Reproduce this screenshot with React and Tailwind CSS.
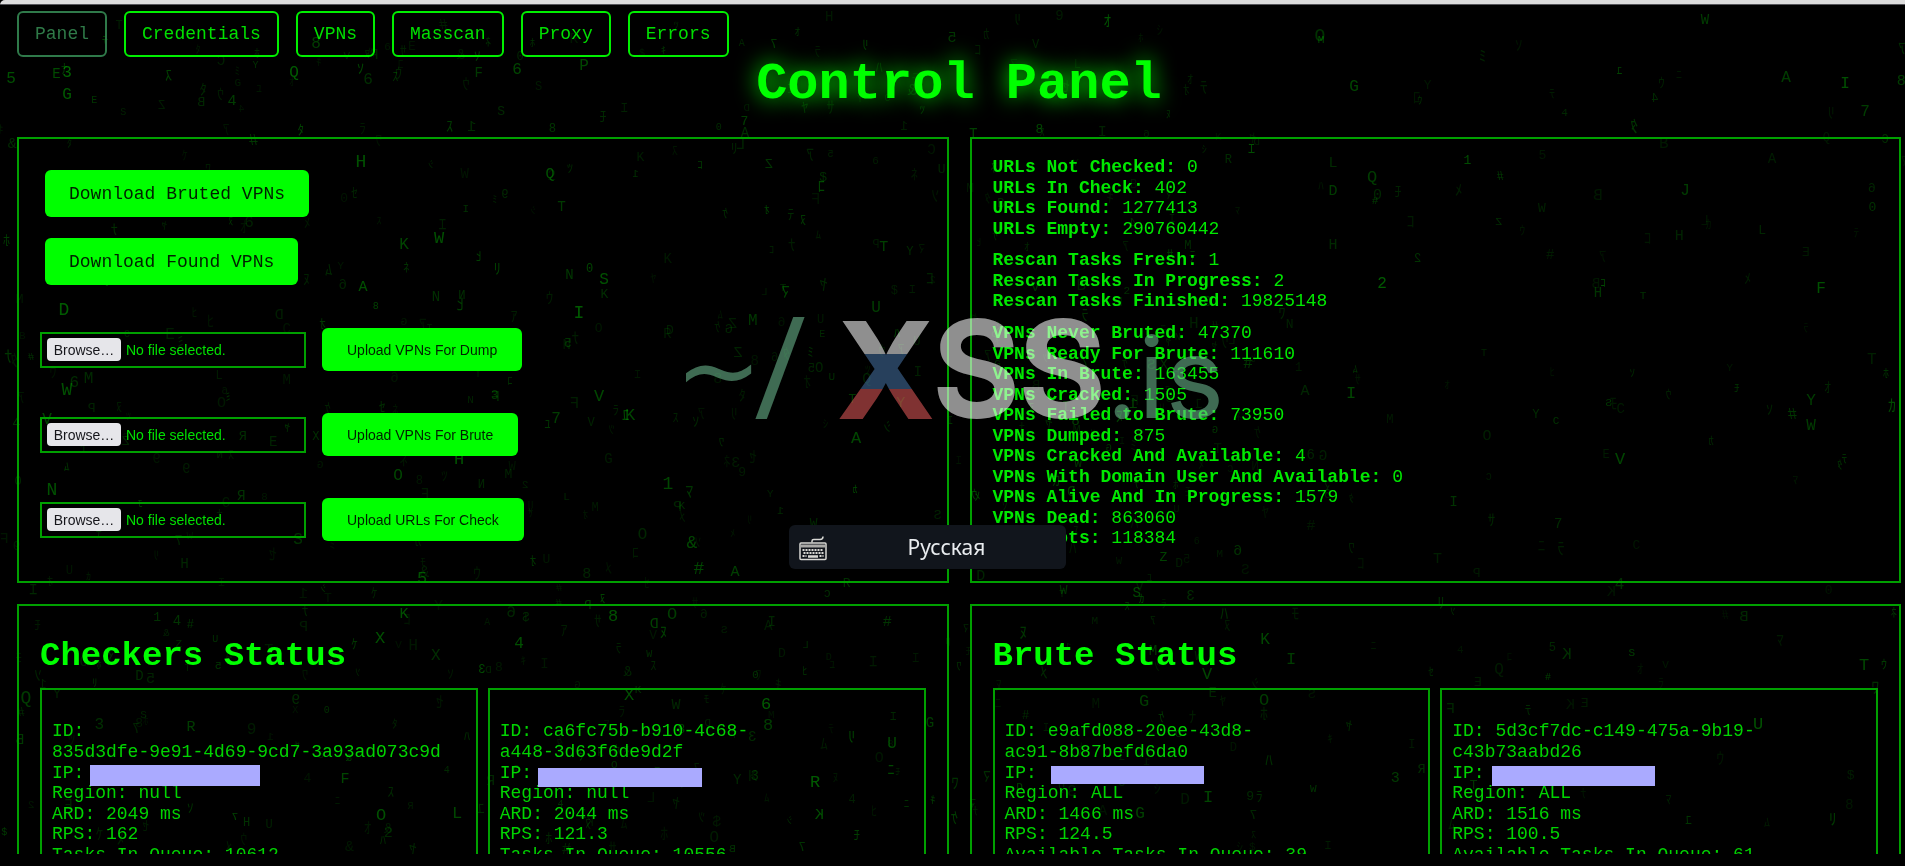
import React, { useEffect, useRef } from 'react';

const navItems = ['Panel', 'Credentials', 'VPNs', 'Masscan', 'Proxy', 'Errors'];

const uploads = [
  { id: 'dump', label: 'Upload VPNs For Dump' },
  { id: 'brute', label: 'Upload VPNs For Brute' },
  { id: 'check', label: 'Upload URLs For Check' },
];

const stats = [
  [
    ['URLs Not Checked', '0'],
    ['URLs In Check', '402'],
    ['URLs Found', '1277413'],
    ['URLs Empty', '290760442'],
  ],
  [
    ['Rescan Tasks Fresh', '1'],
    ['Rescan Tasks In Progress', '2'],
    ['Rescan Tasks Finished', '19825148'],
  ],
  [
    ['VPNs Never Bruted', '47370'],
    ['VPNs Ready For Brute', '111610'],
    ['VPNs In Brute', '163455'],
    ['VPNs Cracked', '1505'],
    ['VPNs Failed to Brute', '73950'],
    ['VPNs Dumped', '875'],
    ['VPNs Cracked And Available', '4'],
    ['VPNs With Domain User And Available', '0'],
    ['VPNs Alive And In Progress', '1579'],
    ['VPNs Dead', '863060'],
    ['Honeypots', '118384'],
  ],
];

// id is split where it may wrap
const checkers = [
  {
    id: ['', '835d3dfe-9e91-4d69-9cd7-3a93ad073c9d'],
    mask: 'left-[38px] top-[2px] w-[170px] h-[21px]',
    rows: ['Region: null', 'ARD: 2049 ms', 'RPS: 162', 'Tasks In Queue: 10612'],
  },
  {
    id: ['ca6fc75b-b910-4c68-', 'a448-3d63f6de9d2f'],
    mask: 'left-[38px] top-[5px] w-[164px] h-[19px]',
    rows: ['Region: null', 'ARD: 2044 ms', 'RPS: 121.3', 'Tasks In Queue: 10556'],
  },
];

const bruters = [
  {
    id: ['e9afd088-20ee-43d8-', 'ac91-8b87befd6da0'],
    mask: 'left-[46px] top-[3px] w-[153px] h-[18px]',
    rows: ['Region: ALL', 'ARD: 1466 ms', 'RPS: 124.5', 'Available Tasks In Queue: 39'],
  },
  {
    id: ['5d3cf7dc-c149-475a-9b19-', 'c43b73aabd26'],
    mask: 'left-[40px] top-[3px] w-[163px] h-[20px]',
    rows: ['Region: ALL', 'ARD: 1516 ms', 'RPS: 100.5', 'Available Tasks In Queue: 61'],
  },
];

// Glyphs that have just been lit: [char, x, y, size, alpha]
const litGlyphs = [
  ['5', 11, 79, 16, 0.4], ['3', 67, 73, 16, 0.5], ['G', 67, 95, 16, 0.45], ['Q', 294, 73, 16, 0.45],
  ['8', 316, 44, 16, 0.3], ['4', 232, 101, 15, 0.3], ['6', 517, 70, 16, 0.35], ['P', 584, 66, 16, 0.35],
  ['H', 361, 162, 18, 0.4], ['Q', 550, 174, 15, 0.4], ['K', 404, 245, 16, 0.35], ['W', 439, 238, 17, 0.4],
  ['A', 363, 287, 15, 0.4], ['D', 64, 310, 18, 0.45], ['I', 579, 313, 18, 0.45], ['S', 604, 280, 16, 0.4],
  ['W', 67, 390, 18, 0.4], ['N', 52, 490, 18, 0.4], ['V', 599, 396, 17, 0.35], ['K', 630, 415, 17, 0.35],
  ['H', 459, 459, 17, 0.4], ['O', 398, 476, 16, 0.35], ['V', 47, 420, 16, 0.35], ['1', 668, 484, 18, 0.35],
  ['&', 692, 543, 18, 0.35], ['#', 699, 569, 18, 0.35], ['5', 422, 578, 17, 0.4], ['7', 556, 419, 16, 0.3],
  ['U', 876, 308, 16, 0.3], ['A', 856, 438, 17, 0.35], ['Q', 1372, 177, 17, 0.3], ['D', 1333, 191, 15, 0.3],
  ['I', 1351, 393, 17, 0.35], ['2', 1382, 284, 16, 0.45], ['O', 1320, 36, 18, 0.25], ['G', 1354, 87, 16, 0.35],
  ['I', 1845, 84, 16, 0.4], ['F', 1821, 289, 16, 0.4], ['Y', 1811, 401, 16, 0.3], ['W', 1811, 426, 16, 0.3],
  ['V', 1620, 459, 17, 0.35], ['K', 404, 614, 15, 0.4], ['X', 380, 638, 17, 0.4], ['8', 613, 616, 17, 0.4],
  ['O', 672, 614, 17, 0.3], ['4', 519, 644, 16, 0.4], ['X', 629, 695, 17, 0.4], ['6', 766, 704, 17, 0.45],
  ['8', 768, 725, 17, 0.3], ['U', 892, 744, 16, 0.35], ['R', 815, 782, 17, 0.45], ['O', 381, 815, 17, 0.4],
  ['Q', 26, 698, 18, 0.3], ['R', 191, 727, 15, 0.3], ['L', 457, 813, 17, 0.35], ['F', 345, 779, 15, 0.35],
  ['K', 1265, 640, 16, 0.35], ['V', 1207, 674, 17, 0.35], ['I', 1291, 659, 17, 0.3], ['O', 1264, 700, 17, 0.3],
  ['G', 1144, 701, 17, 0.3], ['I', 1208, 797, 17, 0.35], ['T', 1864, 665, 17, 0.35], ['U', 1758, 724, 17, 0.4],
  ['W', 1705, 20, 14, 0.3], ['A', 1786, 78, 16, 0.3], ['7', 1865, 112, 16, 0.3], ['J', 1685, 191, 16, 0.3],
];

const MatrixRain = () => {
  const ref = useRef(null);

  useEffect(() => {
    const canvas = ref.current;
    canvas.width = window.innerWidth;
    canvas.height = window.innerHeight;
    const ctx = canvas.getContext('2d');
    const latin = '0123456789ABCDEFGHIKLMNOPQRSTUVWXYZ$#&';
    const kana = 'ｱｳｴｵｶｷｹｺｻｼｽｾｿﾀﾂﾃﾅﾆﾇﾈﾊﾋﾎﾏﾐﾑﾒﾓﾔﾕﾗﾘﾜ';
    let seed = 1337;
    const rand = () => {
      seed = (seed * 16807) % 2147483647;
      return seed / 2147483647;
    };

    ctx.clearRect(0, 0, canvas.width, canvas.height);
    ctx.textAlign = 'center';
    ctx.textBaseline = 'middle';

    const put = (char, x, y, size, alpha, mirrored) => {
      ctx.save();
      ctx.translate(x, y);
      if (mirrored) ctx.scale(-1, 1);
      ctx.font = `${size}px "Liberation Mono", "Noto Sans CJK JP", monospace`;
      ctx.fillStyle = `rgba(0, 200, 0, ${alpha})`;
      ctx.fillText(char, 0, 0);
      ctx.restore();
    };

    const count = Math.round((canvas.width * canvas.height) / 1350);
    for (let i = 0; i < count; i++) {
      const x = rand() * canvas.width;
      const y = 16 + rand() * (canvas.height - 30);
      // the rain thins out to the right of the statistics
      const keep = rand() < (x > canvas.width * 0.66 ? 0.35 : 0.9);
      const set = rand() < 0.5 ? latin : kana;
      const char = set[Math.floor(rand() * set.length)];
      const size = 10 + Math.round(rand() * 6);
      const alpha = 0.1 + rand() * rand() * 0.32;
      const mirrored = rand() < 0.5;
      if (keep) put(char, x, y, size, alpha, mirrored);
    }
    litGlyphs.forEach(([char, x, y, size, alpha]) => put(char, x, y, size, alpha, false));
  }, []);

  return <canvas ref={ref} aria-hidden="true" className="absolute inset-0" />;
};

const Panel = ({ children, className = '' }) => (
  <section className={`border-2 border-[#00a000] px-[21px] ${className}`}>{children}</section>
);

const NavButton = ({ label, active }) => (
  <button
    type="button"
    className={`h-[46px] rounded-md border-2 px-4 ${
      active ? 'border-[#2f7a4a] text-[#2f7a48]' : 'border-[#00f000] text-[#00e000]'
    }`}
  >
    {label}
  </button>
);

const UploadRow = ({ id, label }) => (
  <form className="flex items-center gap-4" onSubmit={(e) => e.preventDefault()}>
    <label
      htmlFor={id}
      className="flex h-9 w-[266px] items-center gap-[5px] border-2 border-[#00a000] px-[5px] font-['Liberation_Sans',Arial,sans-serif] text-[14px] text-[#00e000]"
    >
      <input id={id} type="file" className="sr-only" />
      <span className="flex h-[23px] w-[74px] items-center justify-center rounded bg-[#e6e6ea] text-[#15151a]">
        Browse…
      </span>
      No file selected.
    </label>
    <button
      type="submit"
      className="h-[43px] rounded-md bg-[#00ff00] px-[25px] font-['Liberation_Sans',Arial,sans-serif] text-[14px] text-[#002000]"
    >
      {label}
    </button>
  </form>
);

const Worker = ({ id, mask, rows }) => (
  <article className="flex-1 border-2 border-b-0 border-[#00a000] px-[10px] pt-[31px] pb-5 text-[#00d400]">
    <p className="leading-[21px]">
      ID: {id[0]}
      <br />
      {id[1]}
    </p>
    <p className="relative leading-[20px]">
      IP:
      <span className={`absolute z-10 bg-[#aaaaff] ${mask}`} />
    </p>
    {rows.map((row) => (
      <p key={row} className="odd:leading-[21px] even:leading-[20px]">
        {row}
      </p>
    ))}
  </article>
);

const StatusPanel = ({ title, workers }) => (
  <Panel className="pt-[30px]">
    <h2 className="text-[34px] font-bold leading-[40px] text-[#00ff00]">{title}</h2>
    <div className="mt-[12px] flex gap-[10px]">
      {workers.map((worker) => (
        <Worker key={worker.id[1]} {...worker} />
      ))}
    </div>
  </Panel>
);

const Watermark = () => (
  <svg
    className="pointer-events-none absolute left-[670px] top-[300px] z-20 opacity-[0.56]"
    width="570"
    height="140"
    viewBox="670 300 570 140"
    fontFamily="Inter, sans-serif"
  >
    <defs>
      <linearGradient id="flag" gradientUnits="userSpaceOnUse" x1="0" y1="320" x2="0" y2="419">
        <stop offset="0.34" stopColor="#ffffff" />
        <stop offset="0.34" stopColor="#4672a4" />
        <stop offset="0.7" stopColor="#4672a4" />
        <stop offset="0.7" stopColor="#e55959" />
      </linearGradient>
    </defs>
    <g fill="#70bf94">
      <text x="675" y="406" fontSize="104" fontFamily="DejaVu Sans, sans-serif">~</text>
      <text x="754" y="419" fontSize="142" fontFamily="Open Sans, sans-serif">/</text>
      <text x="1106" y="418" fontSize="112">.</text>
      <text x="1138" y="418" fontSize="112">is</text>
    </g>
    <g fontSize="135" fontWeight="700">
      <text x="836" y="419" fill="url(#flag)">X</text>
      <text x="932 1018" y="418" fill="#ffffff">SS</text>
    </g>
  </svg>
);

const KeyboardIcon = () => (
  <svg width="28" height="28" viewBox="0 0 28 28" fill="none" stroke="#d8d8d4" aria-hidden="true">
    <path d="M13 9.500V8c0-1 .8-1.500 1.800-1.500h6.200c1.600 0 3-1 3-3" strokeWidth="1.500" />
    <rect x="1" y="10" width="26" height="16.500" rx="1" strokeWidth="1.500" />
    <path d="M2 13h24" strokeWidth="3" stroke="#a8a8a6" />
    <path d="M3.500 17h21M4.500 20h20M3.500 23h4M20.500 23h4" strokeWidth="2" strokeDasharray="2 1" />
    <path d="M9 23.500h10" strokeWidth="2.500" />
  </svg>
);

const LayoutPopup = () => (
  <div className="absolute left-[789px] top-[525px] z-30 flex h-11 w-[277px] items-center rounded-md bg-[#11151c] pl-[10px]">
    <KeyboardIcon />
    <span className="flex-1 text-center font-['Noto_Sans',sans-serif] text-[21px] text-[#e9ecef]">
      Русская
    </span>
  </div>
);

const App = () => {
  return (
    <div className="relative flex h-screen flex-col overflow-hidden bg-black font-['Liberation_Mono',monospace] text-[18px] leading-[20px]">
      <MatrixRain />
      <div className="h-[5px] shrink-0 rounded-tl-md border-b border-[#55555a] bg-[#dcdcdc]" />

      <div className="relative flex min-h-0 flex-1 flex-col overflow-hidden pl-[17px] pr-1 pt-[6px]">
        <nav className="flex gap-[17px]">
          {navItems.map((item, index) => (
            <NavButton key={item} label={item} active={index === 0} />
          ))}
        </nav>

        <h1 className="mt-[3px] text-center text-[52px] font-bold leading-[50px] text-[#00ff00] [text-shadow:0_0_22px_#00ff00]">
          Control Panel
        </h1>

        <main className="mt-[27px] grid grid-cols-2 gap-x-[21px] gap-y-[21px]">
          <Panel className="pb-10 pt-[31px]">
            <div className="flex flex-col items-start gap-[21px] pl-[5px]">
              <button type="button" className="h-[47px] rounded-md bg-[#00ff00] px-6 text-[#002000]">
                Download Bruted VPNs
              </button>
              <button type="button" className="h-[47px] rounded-md bg-[#00ff00] px-6 text-[#002000]">
                Download Found VPNs
              </button>
            </div>
            <div className="mt-[43px] flex flex-col gap-[42px]">
              {uploads.map((upload) => (
                <UploadRow key={upload.id} {...upload} />
              ))}
            </div>
          </Panel>

          <Panel className="pt-[18px]">
            <div className="flex flex-col gap-[11px] text-[#00e800]">
              {stats.map((group) => (
                <ul key={group[0][0]}>
                  {group.map(([name, value]) => (
                    <li key={name} className="odd:leading-[21px] even:leading-[20px]">
                      <b>{name}:</b> {value}
                    </li>
                  ))}
                </ul>
              ))}
            </div>
          </Panel>

          <StatusPanel title="Checkers Status" workers={checkers} />
          <StatusPanel title="Brute Status" workers={bruters} />
        </main>
      </div>
      <div className="relative h-[12px] shrink-0 bg-black" />

      <Watermark />
      <LayoutPopup />
    </div>
  );
};

export default App;
